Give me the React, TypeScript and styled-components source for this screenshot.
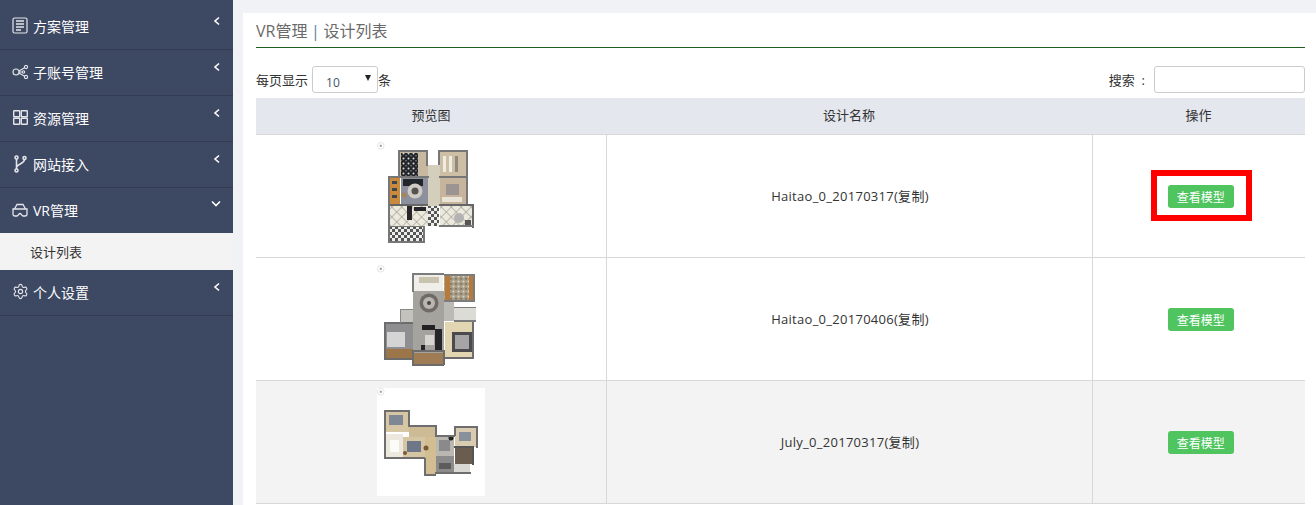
import styled, { createGlobalStyle } from 'styled-components';
import { Settings } from 'lucide-react';
import type { ReactNode } from 'react';

const GlobalStyle = createGlobalStyle`
  html, body {
    margin: 0;
    height: 505px;
    overflow: hidden;
    background: #f1f2f5;
    font-family: 'Open Sans', 'Noto Sans CJK SC', sans-serif;
  }
  * { box-sizing: border-box; }
`;

const Page = styled.div`
  display: flex;
  height: 505px;
  overflow: hidden;
`;

const Sidebar = styled.nav`
  width: 233px;
  flex: none;
  padding-top: 4px;
  background: #3d4863;
`;

const MenuItem = styled.div<{ $open?: boolean }>`
  position: relative;
  display: flex;
  align-items: center;
  height: ${(p) => (p.$open ? '45px' : '46px')};
  padding-left: 11px;
  padding-bottom: 2px;
  border-bottom: ${(p) => (p.$open ? '0' : '1px solid #333c53')};
  color: #fff;
  font-size: 14px;
`;

const MenuIcon = styled.span`
  display: flex;
  justify-content: center;
  width: 18px;
  margin-right: 4px;
  color: #e4e5e9;
`;

const MenuArrow = styled.svg`
  position: absolute;
  right: 12px;
  top: 12px;
`;

const SubItem = styled.div`
  display: flex;
  align-items: center;
  height: 37px;
  padding-left: 30px;
  background: #f3f3f3;
  color: #333;
  font-size: 13px;
`;

const Main = styled.main`
  flex: 1;
  min-width: 0;
  margin: 13px 0 0 10px;
  padding: 0 11px 0 13px;
  background: #fff;
`;

const Title = styled.h2`
  height: 35px;
  margin: 0;
  border-bottom: 1px solid #1f5e1f;
  color: #6a6a6a;
  font-size: 16px;
  font-weight: 400;
  line-height: 36px;
  word-spacing: -0.5px;
`;

const Pipe = styled.span`
  color: #5d7f9f;
`;

const Controls = styled.div`
  display: flex;
  align-items: center;
  justify-content: space-between;
  height: 27px;
  margin-top: 18px;
  margin-bottom: 5px;
  color: #333;
  font-size: 13px;
`;

const Group = styled.label`
  display: flex;
  align-items: center;
`;

const FakeSelect = styled.div`
  display: flex;
  align-items: center;
  justify-content: space-between;
  width: 66px;
  height: 27px;
  margin: 0 0 0 4px;
  padding: 5px 6px 0 13px;
  border: 1px solid #ccc;
  border-radius: 3px;
  color: #44546a;
  font-size: 12px;
`;

const Caret = styled.span`
  margin-top: -8px;
  border-left: 3.5px solid transparent;
  border-right: 3.5px solid transparent;
  border-top: 6px solid #222;
`;

const SearchInput = styled.input`
  width: 151px;
  height: 27px;
  margin-left: 9px;
  border: 1px solid #ccc;
  border-radius: 3px;
  outline: none;
`;

const Table = styled.table`
  width: 1049px;
  border-collapse: collapse;
  table-layout: fixed;
  color: #333;
  font-size: 13px;
`;

const HeadCell = styled.th`
  height: 36px;
  padding: 0 0 2px;
  border-bottom: 1px solid #d8d8d8;
  background: #e4e7ee;
  font-weight: 400;
  text-align: center;
`;

const Row = styled.tr<{ $shaded?: boolean }>`
  height: 123px;
  background: ${(p) => (p.$shaded ? '#f3f3f3' : '#fff')};
`;

const Cell = styled.td`
  padding: 0;
  border-bottom: 1px solid #d8d8d8;
  border-left: 1px solid #d8d8d8;
  text-align: center;
  &:first-child { border-left: 0; }
`;

const NameCell = styled(Cell)`
  padding-left: 2px;
  letter-spacing: 0.28px;
`;

const Thumb = styled.svg`
  display: block;
  margin: 0 auto;
`;

const ButtonWrap = styled.div`
  position: relative;
  display: inline-block;
  top: 1px;
  left: 2px;
`;

const ViewButton = styled.button`
  display: block;
  width: 66px;
  height: 23px;
  padding: 0;
  border: 0;
  border-radius: 3px;
  background: #4fc45f;
  color: #fff;
  font: 12px 'Noto Sans CJK SC', sans-serif;
`;

const Highlight = styled.div`
  position: absolute;
  left: -17px;
  top: -15px;
  width: 101px;
  height: 51px;
  border: 6px solid #fe0000;
`;

const IconBox = styled.svg`
  fill: none;
  stroke: currentColor;
`;

const arrowLeft = (
  <MenuArrow width="8" height="10" viewBox="0 0 8 10" fill="none" stroke="#fff" strokeWidth="1.6">
    <path d="M6 1.5 2 5l4 3.5" />
  </MenuArrow>
);

const arrowDown = (
  <MenuArrow width="10" height="8" viewBox="0 0 10 8" fill="none" stroke="#fff" strokeWidth="1.6">
    <path d="M1 1.500 5 5.500l4-4" />
  </MenuArrow>
);

const icons: Record<string, ReactNode> = {
  plan: (
    <IconBox width="16" height="17" viewBox="0 0 16 17" strokeWidth="1.2">
      <rect x="1" y="1" width="14" height="15" rx="1.5" />
      <path d="M4 4h8M4 7h8M4 10h8M4 13h5" strokeWidth="1.5" />
    </IconBox>
  ),
  share: (
    <IconBox width="17" height="14" viewBox="0 0 17 14" strokeWidth="1.1">
      <circle cx="4" cy="7" r="3" />
      <circle cx="14" cy="2" r="1.6" />
      <circle cx="11.500" cy="7" r="1.2" />
      <circle cx="14" cy="12" r="1.6" />
      <path d="M7 6 12.600 2.800M7 7h3.300M7 8l5.600 3.200" />
    </IconBox>
  ),
  grid: (
    <IconBox width="15" height="15" viewBox="0 0 15 15" strokeWidth="1.4">
      <rect x="0.7" y="0.7" width="6" height="6" rx="0.5" />
      <rect x="8.300" y="0.7" width="6" height="6" rx="0.5" />
      <rect x="0.7" y="8.300" width="6" height="6" rx="0.5" />
      <rect x="8.300" y="8.300" width="6" height="6" rx="0.5" />
    </IconBox>
  ),
  branch: (
    <IconBox width="14" height="18" viewBox="0 0 14 18" strokeWidth="1.6">
      <circle cx="3.500" cy="2.500" r="1.500" />
      <circle cx="11.500" cy="3" r="1.500" />
      <circle cx="3.500" cy="15.500" r="1.500" />
      <path d="M3.500 4v10M11.500 4.500c0 4-6 4-8 7.500" />
    </IconBox>
  ),
  vr: (
    <IconBox width="16" height="14" viewBox="0 0 16 14" strokeWidth="1.3">
      <path d="M2.500 6 5 1.500h6L13.500 6" />
      <path d="M1 6h14v5c0 1.200-.8 2-2 2h-2c-1.300 0-1.800-2.500-3-2.500S6.300 13 5 13H3c-1.200 0-2-.8-2-2z" />
    </IconBox>
  ),
  gear: <Settings size={17} strokeWidth={1.6} />,
};

type PlanRect = [number, number, number, number, string];
type PlanDot = [number, number, number, string];

// rooms of each floor plan: x, y, width, height, fill; dots: cx, cy, r, fill
const plans: { rooms: PlanRect[]; dots: PlanDot[]; walls: PlanRect[] }[] = [
  {
    rooms: [
      [22, 9, 29, 27, '#c7b9a0'],
      [24, 11, 17, 23, 'url(#speck)'],
      [62, 9, 29, 27, '#cdbfa6'],
      [66, 14, 3, 16, '#f0ece2'],
      [72, 14, 3, 16, '#f0ece2'],
      [78, 14, 3, 16, '#8f8a7d'],
      [51, 23, 12, 41, '#d4cfbd'],
      [24, 36, 27, 26, '#8c8f9c'],
      [26, 37, 20, 7, '#24262c'],
      [63, 36, 27, 26, '#c6b49c'],
      [69, 42, 13, 11, '#9b9493'],
      [65, 55, 20, 5, '#eae4d6'],
      [13, 35, 10, 27, '#c98a3c'],
      [15, 39, 5, 3, '#3d4450'],
      [15, 46, 5, 3, '#3d4450'],
      [15, 53, 5, 3, '#3d4450'],
      [13, 64, 38, 20, 'url(#tile)'],
      [51, 64, 11, 20, 'url(#check)'],
      [63, 64, 33, 20, 'url(#tile)'],
      [12, 84, 35, 16, 'url(#check)'],
      [30, 64, 5, 14, '#25272c'],
      [37, 65, 12, 4, '#25272c'],
      [88, 78, 6, 6, '#555'],
    ],
    dots: [
      [38, 49, 7.5, '#cfcbc4'],
      [38, 49, 3.5, '#55514f'],
      [82, 76, 5, '#b3b3b3'],
      [27, 53, 2.5, '#a98552'],
    ],
    walls: [
      [21, 8, 30, 2, '#777'],
      [61, 8, 30, 2, '#777'],
      [21, 8, 2, 28, '#777'],
      [49, 8, 2, 16, '#777'],
      [61, 8, 2, 15, '#777'],
      [89, 8, 2, 54, '#777'],
      [12, 34, 12, 2, '#777'],
      [22, 34, 30, 2, '#777'],
      [62, 34, 28, 2, '#777'],
      [11, 62, 40, 2, '#666'],
      [62, 62, 35, 2, '#666'],
      [11, 34, 2, 66, '#777'],
      [95, 62, 2, 24, '#666'],
      [11, 84, 37, 1, '#777'],
      [11, 99, 37, 2, '#777'],
      [46, 84, 2, 16, '#777'],
      [62, 83, 35, 2, '#777'],
    ],
  },
  {
    rooms: [
      [36, 9, 30, 17, '#efeee8'],
      [42, 12, 20, 6, '#c9c4b0'],
      [67, 10, 30, 26, 'url(#stone)'],
      [68, 11, 5, 24, '#b77a3c'],
      [92, 11, 5, 24, '#b77a3c'],
      [36, 26, 31, 62, '#a5a39d'],
      [45, 60, 13, 5, '#222'],
      [48, 70, 9, 10, '#d8d6d0'],
      [58, 64, 7, 21, '#26272a'],
      [44, 80, 4, 5, '#26272a'],
      [67, 36, 10, 20, '#bcbab4'],
      [77, 43, 22, 13, '#dcdcd6'],
      [24, 44, 12, 13, '#c4c2bc'],
      [8, 58, 28, 36, '#8f8f92'],
      [8, 84, 28, 10, '#9c7448'],
      [10, 67, 18, 15, '#d5d4d4'],
      [68, 57, 28, 36, '#e1d5b2'],
      [75, 67, 20, 20, '#4c4c50'],
      [78, 70, 14, 14, '#a5a5a5'],
      [35, 88, 32, 12, '#a07c55'],
    ],
    dots: [
      [52, 38, 9.5, '#6f6a66'],
      [52, 38, 6, '#b9b6b0'],
      [52, 38, 2, '#444'],
    ],
    walls: [
      [35, 8, 32, 2, '#7c7c7c'],
      [67, 9, 31, 2, '#7c7c7c'],
      [35, 8, 2, 19, '#7c7c7c'],
      [96, 9, 2, 28, '#7c7c7c'],
      [67, 35, 30, 2, '#7c7c7c'],
      [77, 42, 22, 1, '#7c7c7c'],
      [77, 55, 22, 2, '#7c7c7c'],
      [7, 57, 29, 2, '#6c6c6c'],
      [7, 57, 2, 37, '#6c6c6c'],
      [7, 93, 28, 2, '#6c6c6c'],
      [35, 85, 32, 2, '#6c6c6c'],
      [35, 85, 2, 15, '#6c6c6c'],
      [35, 99, 32, 2, '#6c6c6c'],
      [66, 85, 2, 15, '#6c6c6c'],
      [95, 57, 2, 37, '#6c6c6c'],
      [68, 92, 28, 2, '#6c6c6c'],
      [24, 44, 12, 1, '#888'],
      [23, 44, 1, 14, '#888'],
    ],
  },
  {
    rooms: [
      [8, 23, 24, 21, '#d6c6a4'],
      [12, 27, 14, 10, '#7f8794'],
      [32, 38, 27, 11, '#cdbb95'],
      [8, 46, 18, 24, '#ece8dd'],
      [13, 52, 9, 12, '#fbfbf7'],
      [26, 49, 22, 21, '#d5c5a3'],
      [30, 53, 14, 11, '#6e7787'],
      [48, 49, 11, 38, '#d3bd92'],
      [59, 48, 18, 20, '#b9b7b0'],
      [62, 52, 11, 11, '#8a8a8c'],
      [78, 39, 22, 20, '#d8cbaf'],
      [82, 44, 12, 9, '#88909c'],
      [78, 59, 19, 17, '#6a5d50'],
      [59, 68, 18, 17, '#8b8b8b'],
      [62, 75, 12, 6, '#5c5c5c'],
      [77, 76, 16, 9, '#d9d8d2'],
    ],
    dots: [
      [74, 50, 2.5, '#222'],
      [49, 60, 2.5, '#7a5a33'],
      [28, 65, 2, '#7a5a33'],
    ],
    walls: [
      [7, 22, 26, 2, '#6e6e6e'],
      [7, 22, 2, 48, '#6e6e6e'],
      [7, 69, 41, 2, '#6e6e6e'],
      [31, 22, 2, 16, '#6e6e6e'],
      [31, 37, 28, 2, '#6e6e6e'],
      [58, 37, 2, 12, '#6e6e6e'],
      [58, 47, 20, 2, '#6e6e6e'],
      [77, 38, 2, 10, '#6e6e6e'],
      [77, 38, 24, 2, '#6e6e6e'],
      [99, 38, 2, 22, '#6e6e6e'],
      [95, 59, 2, 18, '#555'],
      [47, 70, 2, 18, '#6e6e6e'],
      [47, 86, 12, 2, '#6e6e6e'],
      [58, 84, 36, 2, '#6e6e6e'],
      [77, 58, 20, 2, '#555'],
    ],
  },
];

function FloorPlan({ index }: { index: number }) {
  const plan = plans[index];
  const fillOf = (fill: string) => (fill.startsWith('url(') ? fill.replace(')', `${index})`) : fill);
  return (
    <Thumb width="108" height="108" viewBox="0 0 108 108">
      <defs>
        <pattern id={`tile${index}`} width="7" height="7" patternUnits="userSpaceOnUse" patternTransform="rotate(45)">
          <rect width="7" height="7" fill="#ece9dd" />
          <path d="M0 0h7M0 0v7" stroke="#8b8a80" strokeWidth="1" />
        </pattern>
        <pattern id={`check${index}`} width="6" height="6" patternUnits="userSpaceOnUse">
          <rect width="6" height="6" fill="#efefe9" />
          <rect width="3" height="3" fill="#55565a" />
          <rect x="3" y="3" width="3" height="3" fill="#55565a" />
        </pattern>
        <pattern id={`speck${index}`} width="5" height="5" patternUnits="userSpaceOnUse">
          <rect width="5" height="5" fill="#23262c" />
          <circle cx="1.500" cy="1.500" r="1" fill="#d9d9d9" />
          <circle cx="4" cy="3.800" r="0.7" fill="#9a9a9a" />
        </pattern>
        <pattern id={`stone${index}`} width="5" height="5" patternUnits="userSpaceOnUse">
          <rect width="5" height="5" fill="#a99c84" />
          <circle cx="1.500" cy="1.500" r="1" fill="#d8d4c8" />
          <circle cx="4" cy="3.800" r="0.9" fill="#6f6a5f" />
        </pattern>
        <filter id={`soft${index}`}>
          <feGaussianBlur stdDeviation="0.35" />
        </filter>
      </defs>
      <rect width="108" height="108" fill="#fff" />
      <circle cx="3.800" cy="3.800" r="3.300" fill="#fff" stroke="#ddd" strokeWidth="0.8" />
      <rect x="2.800" y="2.800" width="2" height="2" fill="#999" />
      <g filter={`url(#soft${index})`}>
        {plan.rooms.map(([x, y, w, h, fill], i) => (
          <rect key={i} x={x} y={y} width={w} height={h} fill={fillOf(fill)} />
        ))}
        {plan.dots.map(([cx, cy, r, fill], i) => (
          <circle key={i} cx={cx} cy={cy} r={r} fill={fill} />
        ))}
        {plan.walls.map(([x, y, w, h, fill], i) => (
          <rect key={i} x={x} y={y} width={w} height={h} fill={fill} />
        ))}
      </g>
    </Thumb>
  );
}

const menu = [
  { label: '方案管理', icon: 'plan' },
  { label: '子账号管理', icon: 'share' },
  { label: '资源管理', icon: 'grid' },
  { label: '网站接入', icon: 'branch' },
];

const designs = ['Haitao_0_20170317(复制)', 'Haitao_0_20170406(复制)', 'July_0_20170317(复制)'];

function App() {
  return (
    <Page>
      <GlobalStyle />
      <Sidebar>
        {menu.map((m) => (
          <MenuItem key={m.label}>
            <MenuIcon>{icons[m.icon]}</MenuIcon>
            {m.label}
            {arrowLeft}
          </MenuItem>
        ))}
        <MenuItem $open>
          <MenuIcon>{icons.vr}</MenuIcon>
          VR管理
          {arrowDown}
        </MenuItem>
        <SubItem>设计列表</SubItem>
        <MenuItem>
          <MenuIcon>{icons.gear}</MenuIcon>
          个人设置
          {arrowLeft}
        </MenuItem>
      </Sidebar>
      <Main>
        <Title>
          VR管理 <Pipe>|</Pipe> 设计列表
        </Title>
        <Controls>
          <Group>
            每页显示
            <FakeSelect>
              10
              <Caret />
            </FakeSelect>
            条
          </Group>
          <Group>
            搜索&nbsp;&nbsp;:
            <SearchInput />
          </Group>
        </Controls>
        <Table>
          <colgroup>
            <col width="350" />
            <col width="486" />
            <col width="213" />
          </colgroup>
          <thead>
            <tr>
              <HeadCell>预览图</HeadCell>
              <HeadCell>设计名称</HeadCell>
              <HeadCell>操作</HeadCell>
            </tr>
          </thead>
          <tbody>
            {designs.map((name, i) => (
              <Row key={name} $shaded={i === 2}>
                <Cell>
                  <FloorPlan index={i} />
                </Cell>
                <NameCell>{name}</NameCell>
                <Cell>
                  <ButtonWrap>
                    <ViewButton>查看模型</ViewButton>
                    {i === 0 && <Highlight />}
                  </ButtonWrap>
                </Cell>
              </Row>
            ))}
          </tbody>
        </Table>
      </Main>
    </Page>
  );
}

export default App;
